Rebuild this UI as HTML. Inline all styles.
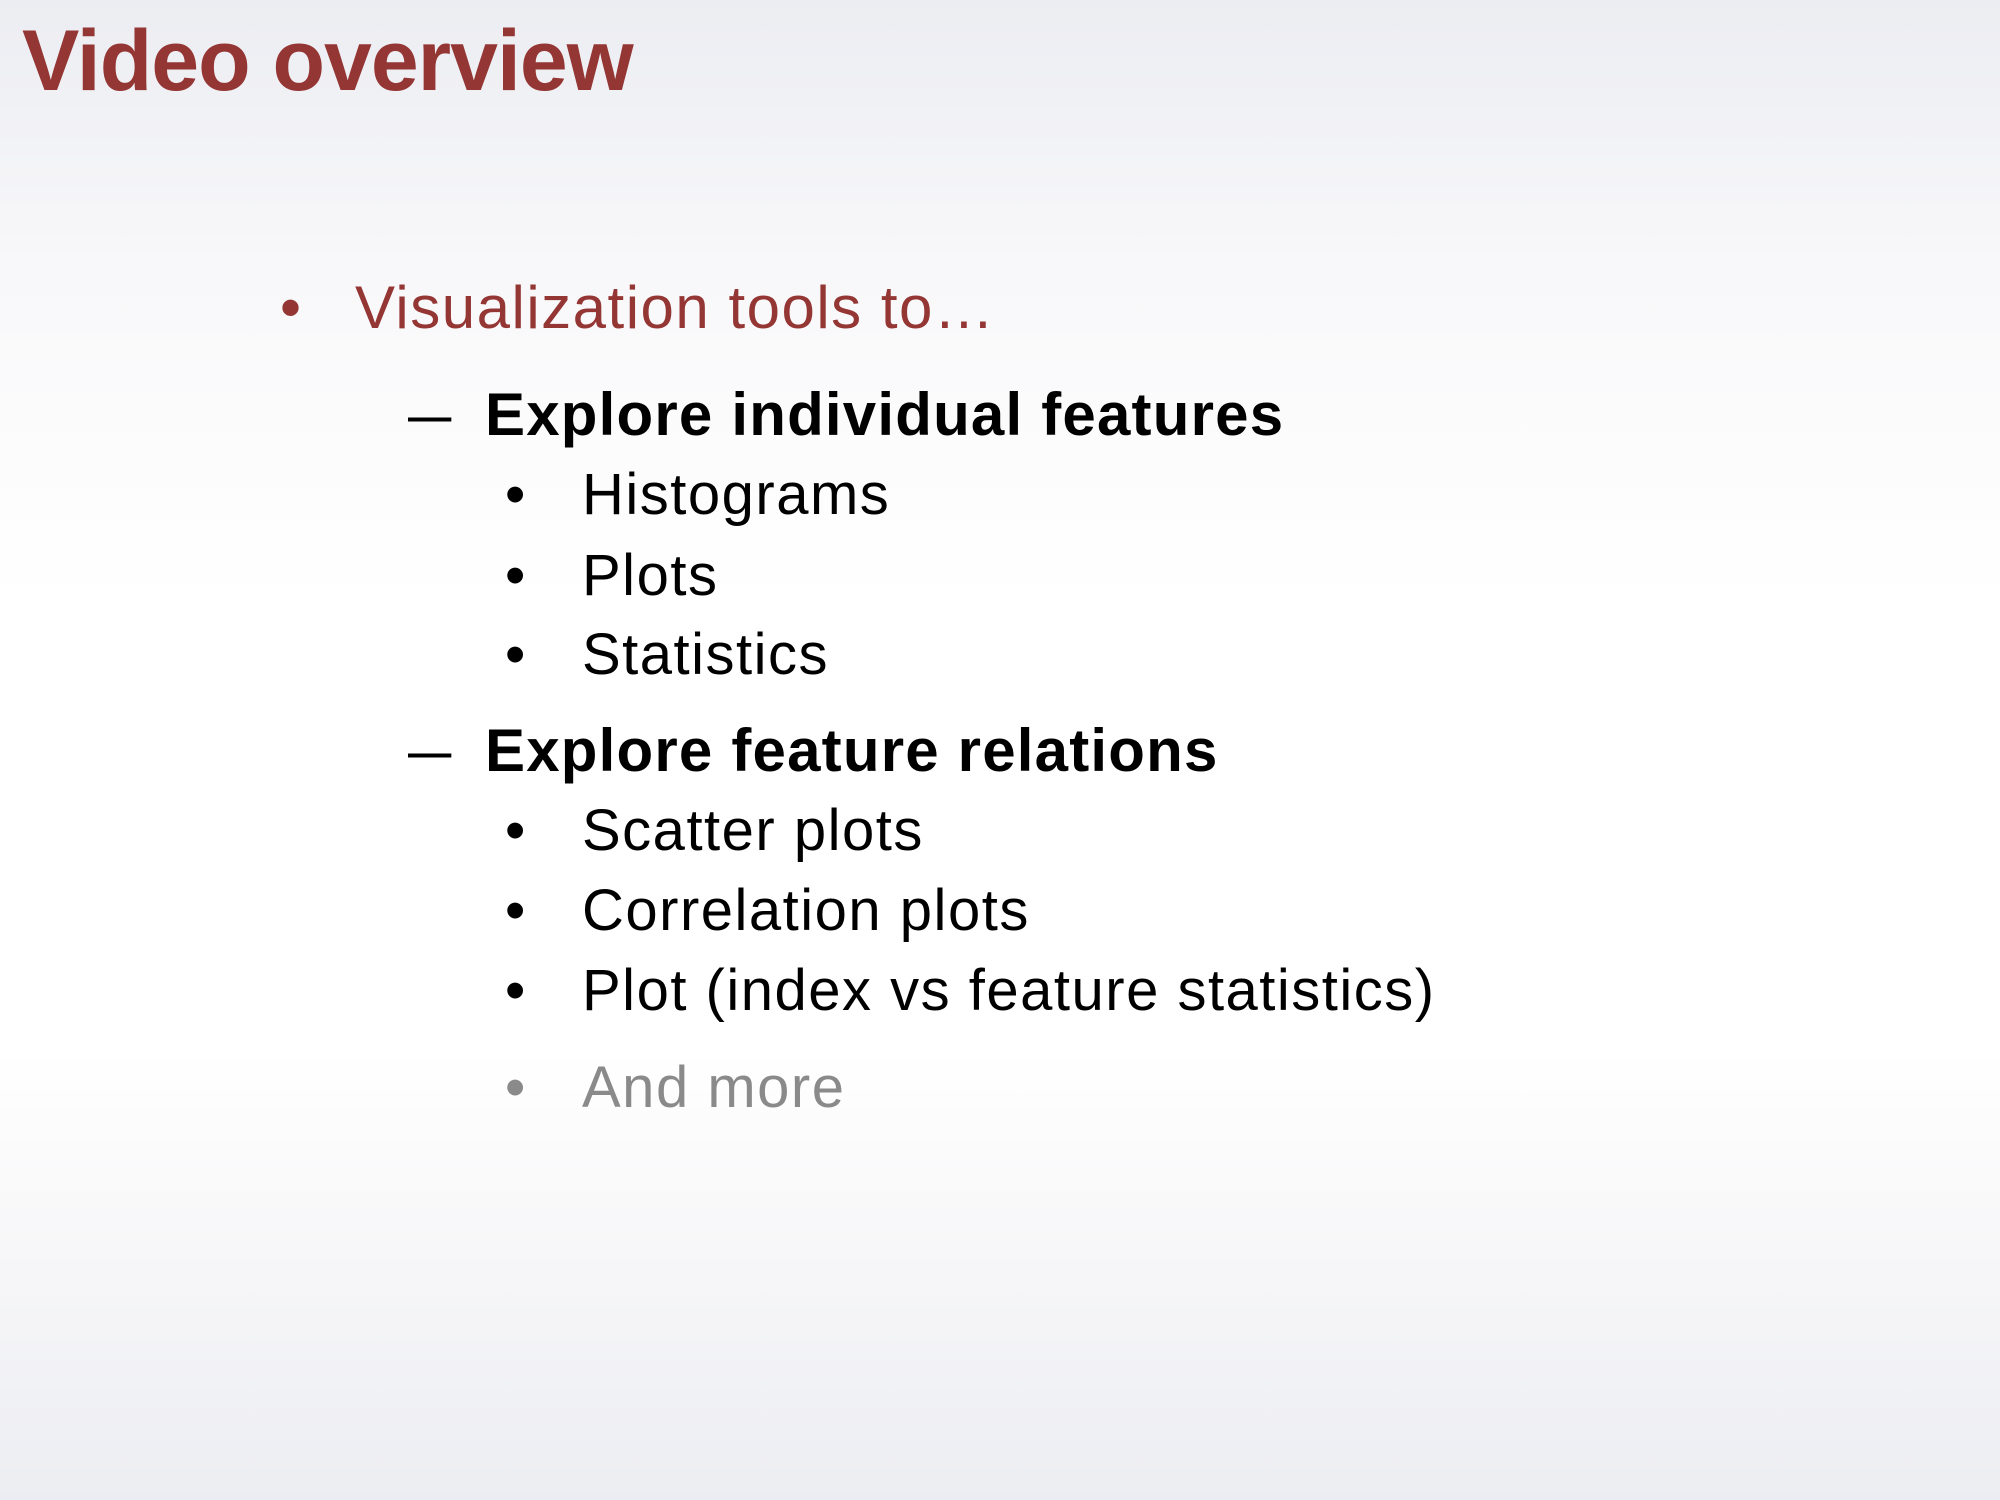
<!DOCTYPE html>
<html><head><meta charset="utf-8"><style>
html,body{margin:0;padding:0}
body{width:2000px;height:1500px;position:relative;overflow:hidden;font-family:"Liberation Sans",sans-serif;
background:linear-gradient(to bottom,#ecedf2 0%,#f8f8fa 18%,#ffffff 40%,#ffffff 70%,#f6f6f8 85%,#ecedf2 100%);}
.t{position:absolute;line-height:1;white-space:nowrap}
.title{left:22px;top:18px;font-size:86px;font-weight:bold;color:#943634;letter-spacing:-1px}
.l1{font-size:60px;color:#943634;letter-spacing:1.5px}
.l2{font-size:60px;font-weight:bold;color:#000;letter-spacing:1.2px}
.l3{font-size:58px;color:#000;letter-spacing:1.5px}
.d{font-size:60px;color:#000;transform:scaleX(1.3);transform-origin:left}
</style></head><body>
<div class="t title">Video overview</div>
<div class="t l1" style="left:280px;top:278px">•</div>
<div class="t l1" style="left:355px;top:278px">Visualization tools to…</div>
<div class="t d" style="left:408px;top:385px">–</div>
<div class="t l2" style="left:485px;top:385px">Explore individual features</div>
<div class="t l3" style="left:505px;top:466px">•</div>
<div class="t l3" style="left:582px;top:466px">Histograms</div>
<div class="t l3" style="left:505px;top:547px">•</div>
<div class="t l3" style="left:582px;top:547px">Plots</div>
<div class="t l3" style="left:505px;top:626px">•</div>
<div class="t l3" style="left:582px;top:626px">Statistics</div>
<div class="t d" style="left:408px;top:721px">–</div>
<div class="t l2" style="left:485px;top:721px">Explore feature relations</div>
<div class="t l3" style="left:505px;top:802px">•</div>
<div class="t l3" style="left:582px;top:802px">Scatter plots</div>
<div class="t l3" style="left:505px;top:882px">•</div>
<div class="t l3" style="left:582px;top:882px">Correlation plots</div>
<div class="t l3" style="left:505px;top:962px">•</div>
<div class="t l3" style="left:582px;top:962px">Plot (index vs feature statistics)</div>
<div class="t l3" style="left:505px;top:1059px;color:#8a8a8a">•</div>
<div class="t l3" style="left:582px;top:1059px;color:#8a8a8a">And more</div>
</body></html>
